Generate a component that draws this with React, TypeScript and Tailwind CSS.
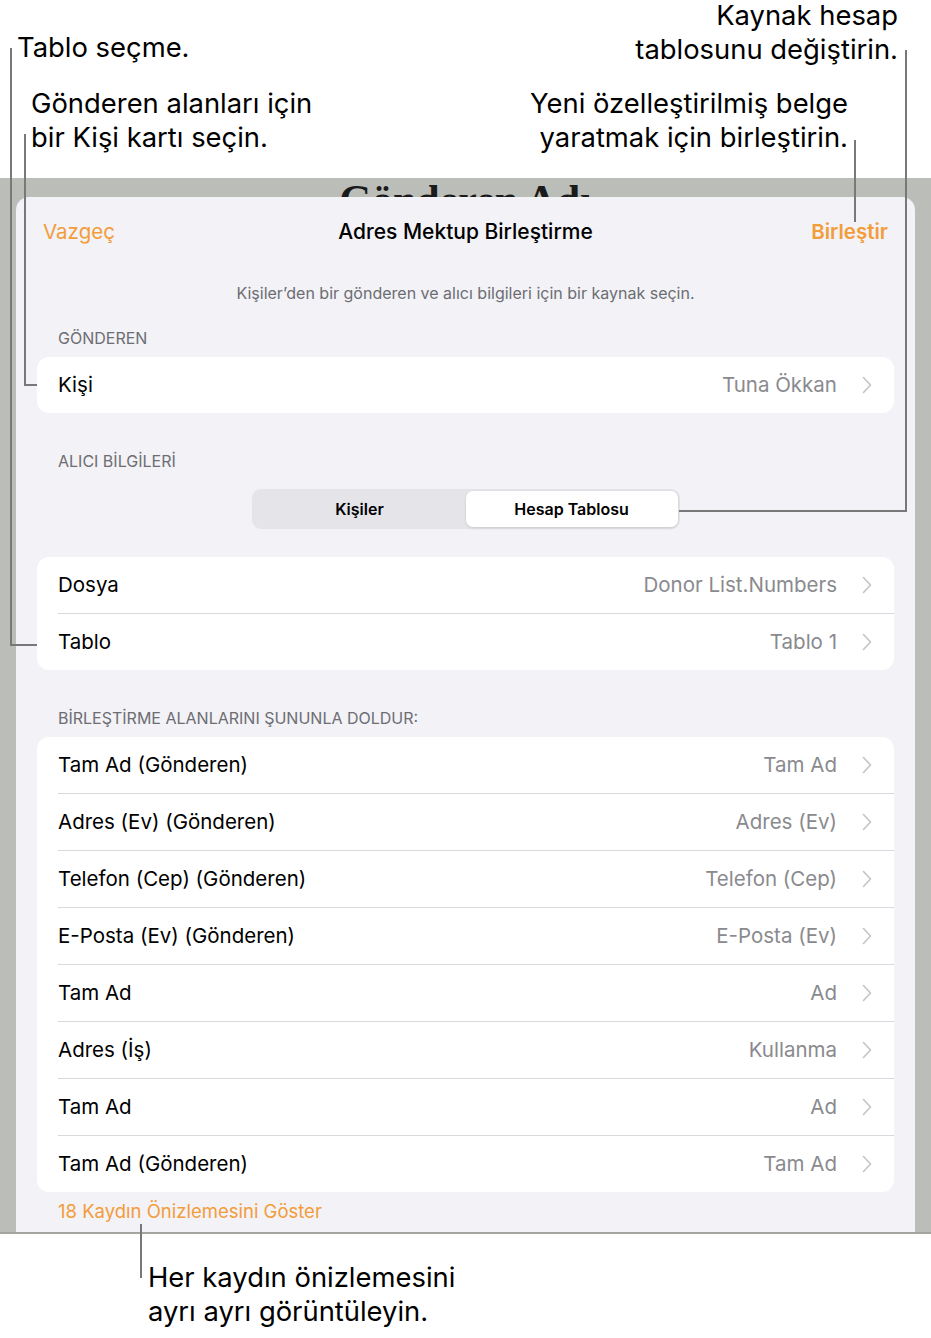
import React from "react";

type Row = { label: string; value: string };

const fieldRows: Row[] = [
  { label: "Tam Ad (Gönderen)", value: "Tam Ad" },
  { label: "Adres (Ev) (Gönderen)", value: "Adres (Ev)" },
  { label: "Telefon (Cep) (Gönderen)", value: "Telefon (Cep)" },
  { label: "E-Posta (Ev) (Gönderen)", value: "E-Posta (Ev)" },
  { label: "Tam Ad", value: "Ad" },
  { label: "Adres (İş)", value: "Kullanma" },
  { label: "Tam Ad", value: "Ad" },
  { label: "Tam Ad (Gönderen)", value: "Tam Ad" },
];

const Chevron = () => (
  <svg width="10" height="18" viewBox="0 0 10 18" fill="none" aria-hidden="true">
    <path d="M1.5 1.5 L8.5 9 L1.5 16.5" stroke="#c4c4c8" strokeWidth="1.6" strokeLinecap="round" strokeLinejoin="round" />
  </svg>
);

const ListRow: React.FC<Row & { divider?: boolean }> = ({ label, value, divider }) => (
  <div className="pl-[21px]">
    {divider && <div className="h-px bg-[#d9d9dd]" />}
    <div className="flex h-[56px] items-center pr-[22px]">
      <span className="flex-1 text-[20.5px] text-black">{label}</span>
      <span className="text-[20.5px] text-[#8a8a8e]">{value}</span>
      <span className="ml-[25px] flex items-center">
        <Chevron />
      </span>
    </div>
  </div>
);

const SectionLabel: React.FC<{ children: React.ReactNode; className?: string }> = ({ children, className = "" }) => (
  <div className={`pl-[21px] text-[16px] leading-[20px] text-[#6d6d72] ${className}`}>{children}</div>
);

// leader lines for the callouts
const Lead: React.FC<{ className: string }> = ({ className }) => (
  <div className={`absolute z-20 bg-[#787878] ${className}`} />
);

export default function App() {
  return (
    <div className="relative h-[1338px] w-[931px] overflow-hidden bg-white font-['Inter','Noto_Sans',sans-serif]">
      {/* top callouts */}
      <div className="relative h-[178px] text-[27.4px] leading-[34px] text-black">
        <div className="flex items-start justify-between">
          <div className="ml-[17px] mt-[30px]">Tablo seçme.</div>
          <div className="mr-[33px] mt-[-2px] text-right">
            Kaynak hesap
            <br />
            tablosunu değiştirin.
          </div>
        </div>
        <div className="mt-[20px] flex items-start justify-between">
          <div className="ml-[31px]">
            Gönderen alanları için
            <br />
            bir Kişi kartı seçin.
          </div>
          <div className="mr-[83px] text-right">
            Yeni özelleştirilmiş belge
            <br />
            yaratmak için birleştirin.
          </div>
        </div>
      </div>

      {/* dimmed document + sheet */}
      <div className="h-[1056px] overflow-hidden border-b-2 border-[#a3a5a1] bg-[#bbbdb9] px-[16px]">
        <div className="h-[19px] text-center font-['Liberation_Serif',serif] text-[42px] font-bold leading-[44px] text-[#1a1a1a]">
          Gönderen Adı
        </div>
        <div className="relative z-10 h-[1100px] rounded-t-[13px] bg-[#f2f2f7]">
          <div className="flex h-[70px] items-center px-[27px] text-[20.5px]">
            <span className="flex-1 text-[#f39c3a]">Vazgeç</span>
            <span className="text-[21px] font-medium text-black">Adres Mektup Birleştirme</span>
            <span className="flex-1 text-right font-semibold text-[#f39c3a]">Birleştir</span>
          </div>
          <div className="mt-[16px] text-center text-[16px] leading-[20px] text-[#6d6d72]">
            Kişiler’den bir gönderen ve alıcı bilgileri için bir kaynak seçin.
          </div>

          <div className="px-[21px]">
            <SectionLabel className="mt-[25px]">GÖNDEREN</SectionLabel>
            <div className="mt-[9px] overflow-hidden rounded-[12px] bg-white">
              <ListRow label="Kişi" value="Tuna Ökkan" />
            </div>

            <SectionLabel className="mt-[38px]">ALICI BİLGİLERİ</SectionLabel>
            <div className="mt-[18px] flex justify-center">
              <div className="flex h-[40px] w-[428px] items-center rounded-[9px] bg-[#e4e4e9] p-[2px] text-[16px] font-semibold text-black">
                <div className="flex h-full flex-1 items-center justify-center">Kişiler</div>
                <div className="flex h-full flex-1 items-center justify-center rounded-[7px] bg-white shadow-[0_1px_3px_rgba(0,0,0,0.12)]">
                  Hesap Tablosu
                </div>
              </div>
            </div>

            <div className="mt-[28px] overflow-hidden rounded-[12px] bg-white">
              <ListRow label="Dosya" value="Donor List.Numbers" />
              <ListRow label="Tablo" value="Tablo 1" divider />
            </div>

            <SectionLabel className="mt-[38px]">BİRLEŞTİRME ALANLARINI ŞUNUNLA DOLDUR:</SectionLabel>
            <div className="mt-[9px] overflow-hidden rounded-[12px] bg-white">
              {fieldRows.map((r, i) => (
                <ListRow key={i} label={r.label} value={r.value} divider={i > 0} />
              ))}
            </div>
            <div className="mt-[8px] pl-[21px] text-[18.5px] leading-[22px] text-[#f39c3a]">
              18 Kaydın Önizlemesini Göster
            </div>
          </div>
        </div>
      </div>

      {/* bottom callout */}
      <div className="ml-[148px] mt-[26px] text-[27.4px] leading-[34px] text-black">
        Her kaydın önizlemesini
        <br />
        ayrı ayrı görüntüleyin.
      </div>

      {/* leader lines */}
      <Lead className="left-[10px] top-[48px] h-[598px] w-[2px]" />
      <Lead className="left-[10px] top-[644px] h-[2px] w-[27px]" />
      <Lead className="left-[24px] top-[134px] h-[252px] w-[2px]" />
      <Lead className="left-[24px] top-[384px] h-[2px] w-[13px]" />
      <Lead className="left-[905px] top-[50px] h-[462px] w-[2px]" />
      <Lead className="left-[679px] top-[510px] h-[2px] w-[228px]" />
      <Lead className="left-[854px] top-[140px] h-[82px] w-[2px]" />
      <Lead className="left-[140px] top-[1224px] h-[54px] w-[2px]" />
    </div>
  );
}
